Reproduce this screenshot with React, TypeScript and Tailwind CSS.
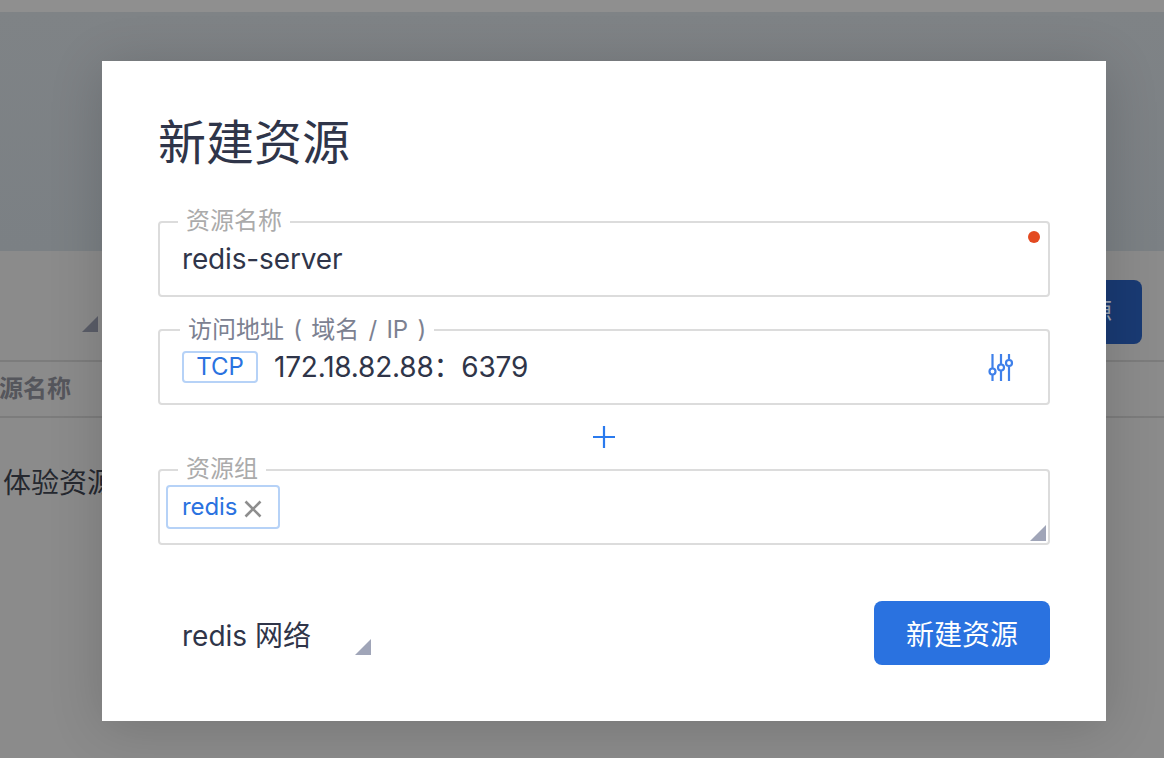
import { Fragment } from "react"

const font = { fontFamily: '"Inter", "Noto Sans CJK SC", sans-serif' }

function Corner({ className }: { className: string }) {
  return (
    <svg width="16" height="16" viewBox="0 0 16 16" className={className}>
      <path d="M16 0V16H0Z" fill="currentColor" />
    </svg>
  )
}

function Field({ label, labelClass, children }: { label: string; labelClass: string; children: React.ReactNode }) {
  return (
    <div className="relative h-[76px] rounded border-2 border-[#dcdcdc] bg-white">
      <span className={`absolute -top-[17px] bg-white px-2 text-2xl leading-[30px] ${labelClass}`}>{label}</span>
      {children}
    </div>
  )
}

function Backdrop() {
  return (
    <div className="flex h-[758px] flex-col overflow-hidden bg-[#8b8b8b]">
      <div className="h-3 shrink-0 bg-[#8f8f8f]" />
      <div className="h-[239px] shrink-0 bg-gradient-to-b from-[#7f8386] to-[#7b8084]" />
      <div className="flex h-[109px] shrink-0 items-start justify-between">
        <Corner className="mt-[65px] ml-[82px] text-[#5a5d68]" />
        <button className="mt-[29px] mr-[22px] flex h-16 w-[156px] items-center justify-end rounded-lg bg-[#193a73] pr-[30px] text-2xl text-[#a0a7b5]">
          新建资源
        </button>
      </div>
      <div className="flex h-[58px] shrink-0 items-center border-y-2 border-[#7c7c7c] text-2xl font-semibold text-[#55565c]">
        <span className="-ml-px">源名称</span>
      </div>
      <div className="mt-[47px] pl-[3px] text-[28px] leading-9 text-[#25282f]">体验资源</div>
    </div>
  )
}

export default function App() {
  return (
    <div className="relative h-[758px] w-[1164px] overflow-hidden" style={font}>
      <Backdrop />
      {/* dialog */}
      <div className="absolute top-[61px] left-[102px] h-[660px] w-[1004px] bg-white px-14 shadow-[0_6px_50px_rgba(0,0,0,0.16)]">
        <h1 className="mt-[52px] text-[48px] leading-[60px] font-normal text-[#2f3549]">新建资源</h1>
        <div className="mt-[48px] flex flex-col">
          <Field label="资源名称" labelClass="left-[18px] text-[#ababab]">
            <div className="pt-[18px] pl-[22px] text-[28px] leading-9 tracking-[-0.15px] text-[#2f3549]">redis-server</div>
            <div className="absolute top-[8px] right-[8px] h-3 w-3 rounded-full bg-[#e34a21]" />
          </Field>
          <div className="mt-8">
            <Field label="访问地址 ( 域名 / IP )" labelClass="left-[20px] translate-y-px text-[#7c8191] [word-spacing:2.5px]">
              <div className="flex items-center pt-[18px] pl-[22px]">
                <span className="flex h-8 w-[76px] items-center justify-center rounded border-2 border-[#b6d2f7] text-2xl text-[#2a72e0]">
                  TCP
                </span>
                <span className="ml-4 text-[28px] leading-9 tracking-[-0.2px] text-[#2f3549]">172.18.82.88：6379</span>
              </div>
              <svg viewBox="0 0 26 28" width="26" height="28" className="absolute top-[22px] right-[34px] text-[#3f80ea]" fill="none" stroke="currentColor" strokeWidth="2.2">
                <Fragment>
                  <path d="M4.5 1V15M4.5 22V28M13 1V11M13 18V28M21 1V6.5M21 13.5V28" />
                  <circle cx="4.5" cy="18.5" r="3" />
                  <circle cx="13" cy="14.5" r="3" />
                  <circle cx="21" cy="10" r="3" />
                </Fragment>
              </svg>
            </Field>
          </div>
          <div className="flex h-[64px] items-center justify-center text-[#2a7aee]">
            <svg viewBox="0 0 24 24" width="24" height="24" fill="none" stroke="currentColor" strokeWidth="2.2">
              <path d="M12 1V23M1 12H23" />
            </svg>
          </div>
          <Field label="资源组" labelClass="left-[18px] text-[#ababab]">
            <div className="pt-[14px] pl-[6px]">
              <span className="inline-flex h-11 items-center rounded border-2 border-[#b6d2f7] pr-4 pl-[14px] text-2xl tracking-[-0.1px] text-[#2a72e0]">
                redis
                <svg viewBox="0 0 18 18" width="18" height="18" className="mt-1 ml-[7px] text-[#8e8e8e]" fill="none" stroke="currentColor" strokeWidth="2.6">
                  <path d="M1.5 1.5L16.5 16.5M16.5 1.5L1.5 16.5" />
                </svg>
              </span>
            </div>
            <Corner className="absolute right-[2px] bottom-[2px] text-[#a0a5b8]" />
          </Field>
        </div>
        <div className="mt-[56px] flex items-center justify-between">
          <div className="flex items-end pl-6">
            <span className="relative top-[3px] text-[28px] leading-9 text-[#2f3549]">redis 网络</span>
            <Corner className="mb-[-4px] ml-[44px] text-[#a0a5b8]" />
          </div>
          <button className="h-16 w-[176px] rounded-lg bg-[#2a72e0] pt-[3px] text-[28px] text-white">新建资源</button>
        </div>
      </div>
    </div>
  )
}
